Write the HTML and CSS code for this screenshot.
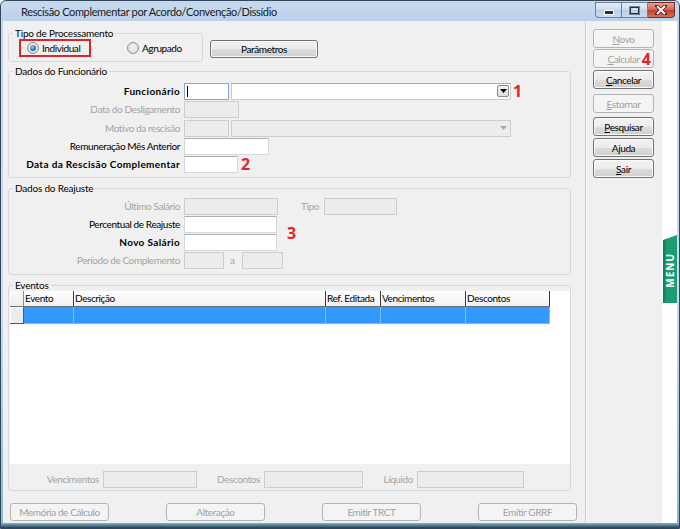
FILE: index.html
```html
<!DOCTYPE html>
<html lang="pt-BR">
<head>
<meta charset="utf-8">
<title>Rescisão Complementar</title>
<link rel="stylesheet" href="styles.css">
</head>
<body>
<div class="window">
  <div class="titlebar">
    <span class="title">Rescisão Complementar por Acordo/Convenção/Dissídio</span>
    <div class="controls">
      <div class="cbtn cmin"><svg width="10" height="5" viewBox="0 0 10 5"><rect x="0.5" y="0.5" width="9" height="4" fill="#1f2d3d" stroke="#fff" stroke-width="1"/></svg></div>
      <div class="cbtn cmax"><svg width="11" height="9" viewBox="0 0 11 9"><rect x="1" y="1" width="9" height="7" fill="none" stroke="#1f2d3d" stroke-width="2"/><rect x="0.5" y="0.5" width="10" height="8" fill="none" stroke="#fff" stroke-width="0.6" opacity="0.7"/></svg></div>
      <div class="cbtn cclose"><svg width="12" height="10" viewBox="0 0 12 10"><path d="M2 1 L10 9 M10 1 L2 9" stroke="#4a1410" stroke-width="3.4" stroke-linecap="square"/><path d="M2 1 L10 9 M10 1 L2 9" stroke="#fff" stroke-width="2"/></svg></div>
    </div>
  </div>
  <div class="client">
    <div class="main">
      <div class="top-row">
        <div class="group tipo">
          <span class="cap">Tipo de Processamento</span>
          <div class="radios">
            <div class="mark-box"><span class="radio checked"></span><span>Individual</span></div>
            <div class="radio-item"><span class="radio"></span><span>Agrupado</span></div>
          </div>
        </div>
        <div class="btn btn-param">Parâmetros</div>
      </div>

      <div class="group func">
        <span class="cap">Dados do Funcionário</span>
        <div class="row">
          <span class="lbl b">Funcionário</span>
          <span class="inp focus w45"><span class="caret"></span></span>
          <span class="combo w280"><span class="ddbtn"><svg width="7" height="4" viewBox="0 0 7 4"><path d="M0 0 H7 L3.5 4 Z" fill="#000"/></svg></span></span>
          <span class="anno">1</span>
        </div>
        <div class="row">
          <span class="lbl dis">Data do Desligamento</span>
          <span class="inp off w55"></span>
        </div>
        <div class="row r3">
          <span class="lbl dis">Motivo da rescisão</span>
          <span class="inp off w45"></span>
          <span class="combo off w280"><span class="ddbtn off"><svg width="7" height="4" viewBox="0 0 7 4"><path d="M0 0 H7 L3.5 4 Z" fill="#a8a8a8"/></svg></span></span>
        </div>
        <div class="row">
          <span class="lbl">Remuneração Mês Anterior</span>
          <span class="inp w85"></span>
        </div>
        <div class="row">
          <span class="lbl b">Data da Rescisão Complementar</span>
          <span class="inp w54"></span>
          <span class="anno a2">2</span>
        </div>
      </div>

      <div class="group reaj">
        <span class="cap">Dados do Reajuste</span>
        <div class="row">
          <span class="lbl dis">Último Salário</span>
          <span class="inp off w94"></span>
          <span class="dis tipo-lbl">Tipo</span>
          <span class="inp off w73"></span>
        </div>
        <div class="row anno-host">
          <span class="lbl">Percentual de Reajuste</span>
          <span class="inp w93"></span>
          <span class="anno a3">3</span>
        </div>
        <div class="row">
          <span class="lbl b">Novo Salário</span>
          <span class="inp w93"></span>
        </div>
        <div class="row">
          <span class="lbl dis">Período de Complemento</span>
          <span class="inp off w40"></span>
          <span class="dis a-lbl">a</span>
          <span class="inp off w41"></span>
        </div>
      </div>

      <div class="group eventos">
        <span class="cap">Eventos</span>
        <div class="grid">
          <div class="ghead">
            <span class="gind"></span>
            <span class="gh">Evento</span>
            <span class="gh">Descrição</span>
            <span class="gh">Ref. Editada</span>
            <span class="gh">Vencimentos</span>
            <span class="gh">Descontos</span>
          </div>
          <div class="grow">
            <span class="gind"></span>
            <span class="gc"></span>
            <span class="gc"></span>
            <span class="gc"></span>
            <span class="gc"></span>
            <span class="gc"></span>
          </div>
        </div>
        <div class="totals">
          <span class="dis tl1">Vencimentos</span>
          <span class="inp off w94"></span>
          <span class="dis tl2">Descontos</span>
          <span class="inp off w99"></span>
          <span class="dis tl3">Líquido</span>
          <span class="inp off w107"></span>
        </div>
      </div>

      <div class="bottom-btns">
        <div class="btn off wb">Memória de Cálculo</div>
        <div class="btn off wb">Alteração</div>
        <div class="btn off wb">Emitir TRCT</div>
        <div class="btn off wb">Emitir GRRF</div>
      </div>
    </div>

    <div class="side">
      <div class="btn off sbtn s-novo"><span><u>N</u>ovo</span></div>
      <div class="btn off sbtn s-calc"><span><u>C</u>alcular</span><span class="anno a4">4</span></div>
      <div class="btn sbtn s-canc"><span><u>C</u>ancelar</span></div>
      <div class="btn off sbtn s-est"><span><u>E</u>stornar</span></div>
      <div class="btn sbtn s-pesq"><span><u>P</u>esquisar</span></div>
      <div class="btn sbtn s-aj"><span>A<u>j</u>uda</span></div>
      <div class="btn sbtn s-sair"><span><u>S</u>air</span></div>
    </div>

    <div class="strip">
      <div class="menu-tab"><span>MENU</span></div>
    </div>
  </div>
</div>
</body>
</html>
```

FILE: styles.css
```css
* { box-sizing: border-box; }
html, body { margin: 0; padding: 0; }
body {
  width: 680px;
  height: 529px;
  overflow: hidden;
  background: #fff;
  font-family: Lato, "Noto Sans", sans-serif;
  font-size: 10px;
  letter-spacing: -0.4px;
  color: #000;
}

.window {
  width: 680px;
  height: 529px;
  display: flex;
  flex-direction: column;
  background: linear-gradient(#c2d6ec, #c9dbee 60%, #7fbfd3 99%, #2b3c4f 100%);
  border: 1px solid #34465a;
  border-radius: 6px 6px 0 0;
}

.titlebar {
  height: 20px;
  display: flex;
  align-items: center;
  padding-left: 20px;
  background: linear-gradient(#c6daef, #bcd2ea);
  border-radius: 6px 6px 0 0;
}
.title { font-size: 11px; color: #1b1b1b; letter-spacing: -0.35px; }
.controls {
  margin-left: auto;
  margin-right: 4px;
  align-self: flex-start;
  margin-top: 1px;
  display: flex;
}
.cbtn {
  height: 16px;
  display: flex;
  align-items: center;
  justify-content: center;
  border: 1px solid #6a809b;
  background: linear-gradient(#e4edf7, #cbdcef 50%, #b9cfe8 51%, #c9dbef);
}
.cmin { width: 26px; border-radius: 0 0 0 4px; border-right: none; }
.cmin svg { margin-top: 5px; }
.cmax { width: 27px; }
.cclose {
  width: 27px;
  border-color: #7b2a22;
  border-left: none;
  border-radius: 0 0 4px 0;
  background: linear-gradient(#e5a396, #d3685a 45%, #c2402f 55%, #d4735c);
}

.client {
  flex: 1;
  display: flex;
  margin: 0 2px 5px 2px;
  background: #f0f0f0;
}

.main { width: 582px; padding: 12px 0 0 5px; }
.side {
  width: 77px;
  border-left: 1px solid #cbcbcb;
  box-shadow: inset 1px 0 0 #fafafa;
  padding: 8px 0 0 7px;
  display: flex;
  flex-direction: column;
}
.strip { width: 15px; background: #fff; display: flex; flex-direction: column; }

/* group boxes */
.group {
  position: relative;
  border: 1px solid #d5dadf;
  border-radius: 3px;
}
.cap {
  position: absolute;
  left: 4px;
  top: -7px;
  padding: 0 2px;
  line-height: 12px;
  background: #f0f0f0;
  white-space: nowrap;
  letter-spacing: -0.2px;
}

.top-row { display: flex; align-items: flex-start; }
.tipo { width: 195px; padding: 5px 0 4px 0; }
.radios { display: flex; align-items: center; }
.mark-box {
  margin-left: 10px;
  width: 72px;
  height: 18px;
  border: 2px solid #e3232a;
  display: flex;
  align-items: center;
  padding-left: 6px;
  gap: 3px;
}
.radio-item { display: flex; align-items: center; gap: 3px; margin-left: 36px; }
.radio {
  width: 12px;
  height: 12px;
  border-radius: 50%;
  border: 1px solid #8e8f8f;
  background: radial-gradient(circle at 50% 40%, #f4f4f4, #d6d6d6);
  display: inline-flex;
  align-items: center;
  justify-content: center;
}
.radio.checked::after {
  content: "";
  width: 6px;
  height: 6px;
  border-radius: 50%;
  background: radial-gradient(circle at 40% 35%, #9fd3f5, #1f6fb5 60%, #154b85);
}

.btn {
  display: flex;
  align-items: center;
  justify-content: center;
  height: 18px;
  border: 1px solid #707070;
  border-radius: 3px;
  background: linear-gradient(#f3f3f3, #ebebeb 50%, #dddddd 51%, #cfcfcf);
  box-shadow: inset 0 0 0 1px #fbfbfb;
  color: #000;
  white-space: nowrap;
}
.btn.off {
  border-color: #b0b4b7;
  background: #f4f4f4;
  box-shadow: none;
  color: #a0a0a0;
}
.btn-param { width: 108px; margin: 7px 0 0 7px; }

/* form rows */
.func { width: 563px; margin-top: 9px; padding: 10px 0 4px 0; }
.reaj { width: 563px; margin-top: 10px; padding: 8px 0 5px 0; }
.row { display: flex; align-items: center; height: 18px; }
.row.r3 { margin-top: 1px; }
.lbl {
  width: 171px;
  margin-right: 4px;
  text-align: right;
  white-space: nowrap;
}
.b { font-weight: bold; letter-spacing: 0.35px; }
.dis { color: #a3a3a3; }

.inp {
  height: 17px;
  background: #fff;
  border: 1px solid #d4d8de;
  border-top-color: #abadb3;
  position: relative;
  display: inline-block;
}
.inp.off { background: #ececec; border-color: #cdcdcd; }
.inp.focus { border-color: #85a9d1; }
.caret {
  position: absolute;
  left: 2px;
  top: 2px;
  width: 1px;
  height: 11px;
  background: #000;
}
.w40 { width: 40px; } .w41 { width: 41px; } .w45 { width: 45px; }
.w54 { width: 54px; } .w55 { width: 55px; } .w73 { width: 73px; }
.w85 { width: 85px; } .w93 { width: 93px; } .w94 { width: 94px; }
.w99 { width: 99px; } .w107 { width: 107px; } .w280 { width: 280px; }

.combo {
  margin-left: 2px;
  height: 17px;
  background: #fff;
  border: 1px solid #c8cbd0;
  border-top-color: #abadb3;
  display: flex;
  justify-content: flex-end;
  align-items: center;
  padding-right: 1px;
}
.combo.off { background: #ececec; border-color: #cdcdcd; }
.ddbtn {
  width: 12px;
  height: 12px;
  border: 1px solid #8a8a8a;
  border-radius: 2px;
  background: linear-gradient(#f6f6f6, #dedede);
  display: flex;
  align-items: center;
  justify-content: center;
}
.ddbtn.off { border-color: transparent; background: transparent; }

.anno {
  color: #e3232a;
  font-family: "Noto Sans", sans-serif;
  font-weight: bold;
  font-size: 16px;
  line-height: 16px;
  letter-spacing: 0;
}
.row .anno { margin-left: 2px; }
.row .a2 { margin-left: 3px; }
.anno-host { position: relative; }
.row .a3 { position: absolute; left: 278px; top: 10px; margin: 0; }

.tipo-lbl { margin-left: 23px; margin-right: 5px; }
.a-lbl { margin: 0 7px 0 6px; }

/* eventos */
.eventos { width: 563px; margin-top: 10px; padding: 5px 0 2px 1px; }
.grid {
  width: 560px;
  height: 173px;
  background: #fff;
}
.ghead, .grow {
  display: grid;
  grid-template-columns: 14px 50px 252px 55px 85px 84px;
}
.ghead { height: 16px; }
.ghead .gind {
  background: linear-gradient(#fbfbfb, #ececec);
  border-right: 1px solid #8e8e8e;
  border-bottom: 1px solid #6e6e6e;
}
.gh {
  background: linear-gradient(#ffffff, #f1f1f1);
  border-right: 1px solid #3a3a3a;
  border-bottom: 1px solid #6e6e6e;
  padding-left: 1px;
  line-height: 15px;
  white-space: nowrap;
  overflow: hidden;
}
.grow { height: 17px; }
.grow .gind {
  background: #ececec;
  border-right: 1px solid #5a5a5a;
  border-bottom: 1px solid #5a5a5a;
  box-shadow: inset 1px 1px 0 #fff;
}
.gc {
  background: #3399ff;
  border-right: 1px solid #82bdf5;
  border-bottom: 1px solid #7fb6ea;
}

.totals { display: flex; align-items: center; height: 18px; margin-top: 6px; }
.tl1 { width: 89px; margin-right: 4px; text-align: right; }
.tl2 { width: 63px; margin-right: 4px; text-align: right; }
.tl3 { width: 50px; margin-right: 4px; text-align: right; }

.bottom-btns {
  display: flex;
  justify-content: space-between;
  width: 567px;
  margin: 12px 0 0 2px;
}
.wb { width: 99px; }

/* side buttons */
.sbtn { width: 61px; height: 19px; position: relative; }
.s-calc { margin-top: 1px; }
.s-canc { margin-top: 2px; }
.s-est { margin-top: 5px; }
.s-pesq { margin-top: 4px; }
.s-aj { margin-top: 2px; }
.s-sair { margin-top: 2px; }
.sbtn .a4 { position: absolute; right: 2px; top: 1px; }

/* menu tab */
.menu-tab {
  margin-top: 214px;
  margin-left: 1px;
  width: 14px;
  height: 68px;
  background: linear-gradient(90deg, #0f7a5b, #1c9c75 30%, #1c9c75);
  clip-path: polygon(0 5px, 100% 0, 100% 100%, 0 100%);
  display: flex;
  align-items: center;
  justify-content: center;
}
.menu-tab span {
  writing-mode: vertical-rl;
  transform: rotate(180deg);
  color: #fff;
  font-family: "Noto Sans", sans-serif;
  font-weight: bold;
  font-size: 10px;
  letter-spacing: 1px;
  margin-top: 3px;
}
```
